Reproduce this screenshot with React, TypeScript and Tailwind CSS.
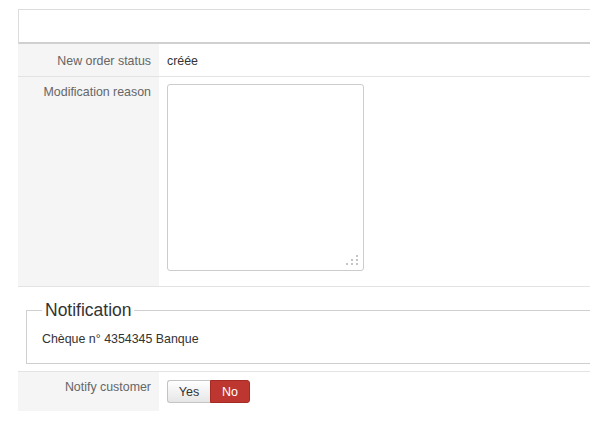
import React from "react";

function Grip() {
  const dots = [
    [10, 0],
    [5, 4],
    [10, 4],
    [0, 8],
    [5, 8],
    [10, 8],
  ];
  return (
    <svg className="absolute right-[6px] bottom-[6px]" width="12" height="10" viewBox="0 0 12 10">
      {dots.map(([x, y], i) => (
        <rect key={i} x={x} y={y} width="2" height="2" fill="#c4c4c4" />
      ))}
    </svg>
  );
}

export default function App() {
  return (
    <div className="w-[590px] h-[437px] overflow-hidden bg-white font-['Liberation_Sans',Arial,sans-serif] text-[12.4px] leading-[18px] text-[#333]">
      <div className="pt-[9px] pl-[18px]">
        <div className="w-[620px]">
          {/* panel header */}
          <div className="h-[35px] border-t border-l border-[#dcdcdc] border-b-2 border-b-[#d0d0d0]" />

          {/* new order status */}
          <div className="flex h-[33px] border-b border-[#e3e3e3]">
            <div className="w-[141px] bg-[#f5f5f5] flex items-center justify-end pr-2 pt-[2px] text-[#666]">
              New order status
            </div>
            <div className="flex items-center pl-2 pt-[2px] text-[#333]">créée</div>
          </div>

          {/* modification reason */}
          <div className="flex h-[210px] border-b border-[#e3e3e3]">
            <div className="w-[141px] bg-[#f5f5f5] text-right pr-2 pt-[6px] text-[#666]">
              Modification reason
            </div>
            <div className="pl-2 pt-[7px]">
              <div className="relative w-[197px] h-[187px]">
                <textarea className="w-full h-full resize-none border border-[#cccccc] rounded-[3px] bg-white outline-none" />
                <Grip />
              </div>
            </div>
          </div>

          {/* notification */}
          <fieldset className="ml-[8px] mt-[11px] border border-[#cfcfcf] px-[15px] pb-[15px]">
            <legend className="pl-[3px] pr-[2px] text-[17.5px] leading-[24px] text-[#333]">Notification</legend>
            <div className="pt-[8px] text-[#333]">Chèque n° 4354345 Banque</div>
          </fieldset>

          {/* notify customer */}
          <div className="flex h-[40px] mt-[7px] border-t border-[#e3e3e3]">
            <div className="w-[141px] bg-[#f5f5f5] text-right pr-2 pt-[6px] text-[#666]">
              Notify customer
            </div>
            <div className="pl-2 pt-[8px] flex">
              <button className="w-[43px] h-[23px] border border-[#c4c4c4] border-r-0 rounded-l-[3px] bg-gradient-to-b from-white to-[#e6e6e6] text-[#333] text-[12.5px]">
                Yes
              </button>
              <button className="w-[40px] h-[23px] border border-[#a52a24] rounded-r-[3px] bg-[#bd362f] text-white text-[12.5px]">
                No
              </button>
            </div>
          </div>
        </div>
      </div>
    </div>
  );
}
